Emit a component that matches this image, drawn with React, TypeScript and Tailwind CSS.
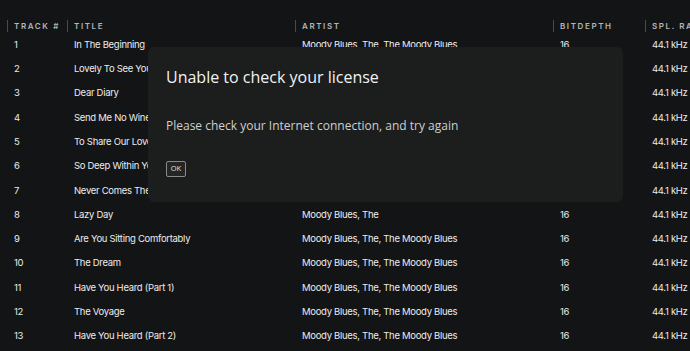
import React from 'react';

interface Track {
    no: number;
    title: string;
    artist: string;
}

const tracks: Track[] = [
    { no: 1, title: "In The Beginning", artist: "Moody Blues, The, The Moody Blues" },
    { no: 2, title: "Lovely To See You", artist: "Moody Blues, The, The Moody Blues" },
    { no: 3, title: "Dear Diary", artist: "Moody Blues, The, The Moody Blues" },
    { no: 4, title: "Send Me No Wine", artist: "Moody Blues, The, The Moody Blues" },
    { no: 5, title: "To Share Our Love", artist: "Moody Blues, The, The Moody Blues" },
    { no: 6, title: "So Deep Within You", artist: "Moody Blues, The, The Moody Blues" },
    { no: 7, title: "Never Comes The Day", artist: "Moody Blues, The, The Moody Blues" },
    { no: 8, title: "Lazy Day", artist: "Moody Blues, The" },
    { no: 9, title: "Are You Sitting Comfortably", artist: "Moody Blues, The, The Moody Blues" },
    { no: 10, title: "The Dream", artist: "Moody Blues, The, The Moody Blues" },
    { no: 11, title: "Have You Heard (Part 1)", artist: "Moody Blues, The, The Moody Blues" },
    { no: 12, title: "The Voyage", artist: "Moody Blues, The, The Moody Blues" },
    { no: 13, title: "Have You Heard (Part 2)", artist: "Moody Blues, The, The Moody Blues" },
];

const headers = ["Track #", "Title", "Artist", "Bitdepth", "Spl. Rate"];

const cols = "grid grid-cols-[60px_228px_258px_92px_1fr]";

const App: React.FC = () => {
    return (
        <div className="relative w-[690px] h-[351px] overflow-hidden bg-[#131416] font-['Inter',sans-serif]">
            <div className="pl-[7px] pt-[20px]">
                <div className={`${cols} h-[12px]`}>
                    {headers.map((h) => (
                        <div key={h} className="border-l border-[#4a4b4d] pl-[6px] flex items-center text-[8px] font-semibold uppercase tracking-[0.2em] text-[#b4b5b7] whitespace-nowrap overflow-hidden">
                            {h}
                        </div>
                    ))}
                </div>
                {tracks.map((t) => (
                    <div key={t.no} className={`${cols} h-[24.33px] pt-[1px] items-center text-[9.5px] tracking-[-0.3px] text-[#ececec] whitespace-nowrap`}>
                        <span className="pl-[7px]">{t.no}</span>
                        <span className="pl-[7px]">{t.title}</span>
                        <span className="pl-[7px]">{t.artist}</span>
                        <span className="pl-[7px]">16</span>
                        <span className="pl-[7px]">44.1 kHz</span>
                    </div>
                ))}
            </div>

            <div className="absolute left-[148px] top-[47px] w-[475px] h-[155px] rounded-[6px] bg-[#1c1d1d] px-[18px] pt-[18px] font-['Open_Sans',sans-serif]">
                <h1 className="text-[16px] leading-[24px] text-[#f2f2f2]">Unable to check your license</h1>
                <p className="mt-[28px] text-[12px] leading-[17px] text-[#cfcfcf]">Please check your Internet connection, and try again</p>
                <button className="mt-[27px] w-[20px] h-[16px] border border-[#8a8a8a] rounded-[2px] bg-[#252525] text-[7.5px] text-[#e0e0e0] flex items-center justify-center">
                    OK
                </button>
            </div>
        </div>
    );
};

export default App;
